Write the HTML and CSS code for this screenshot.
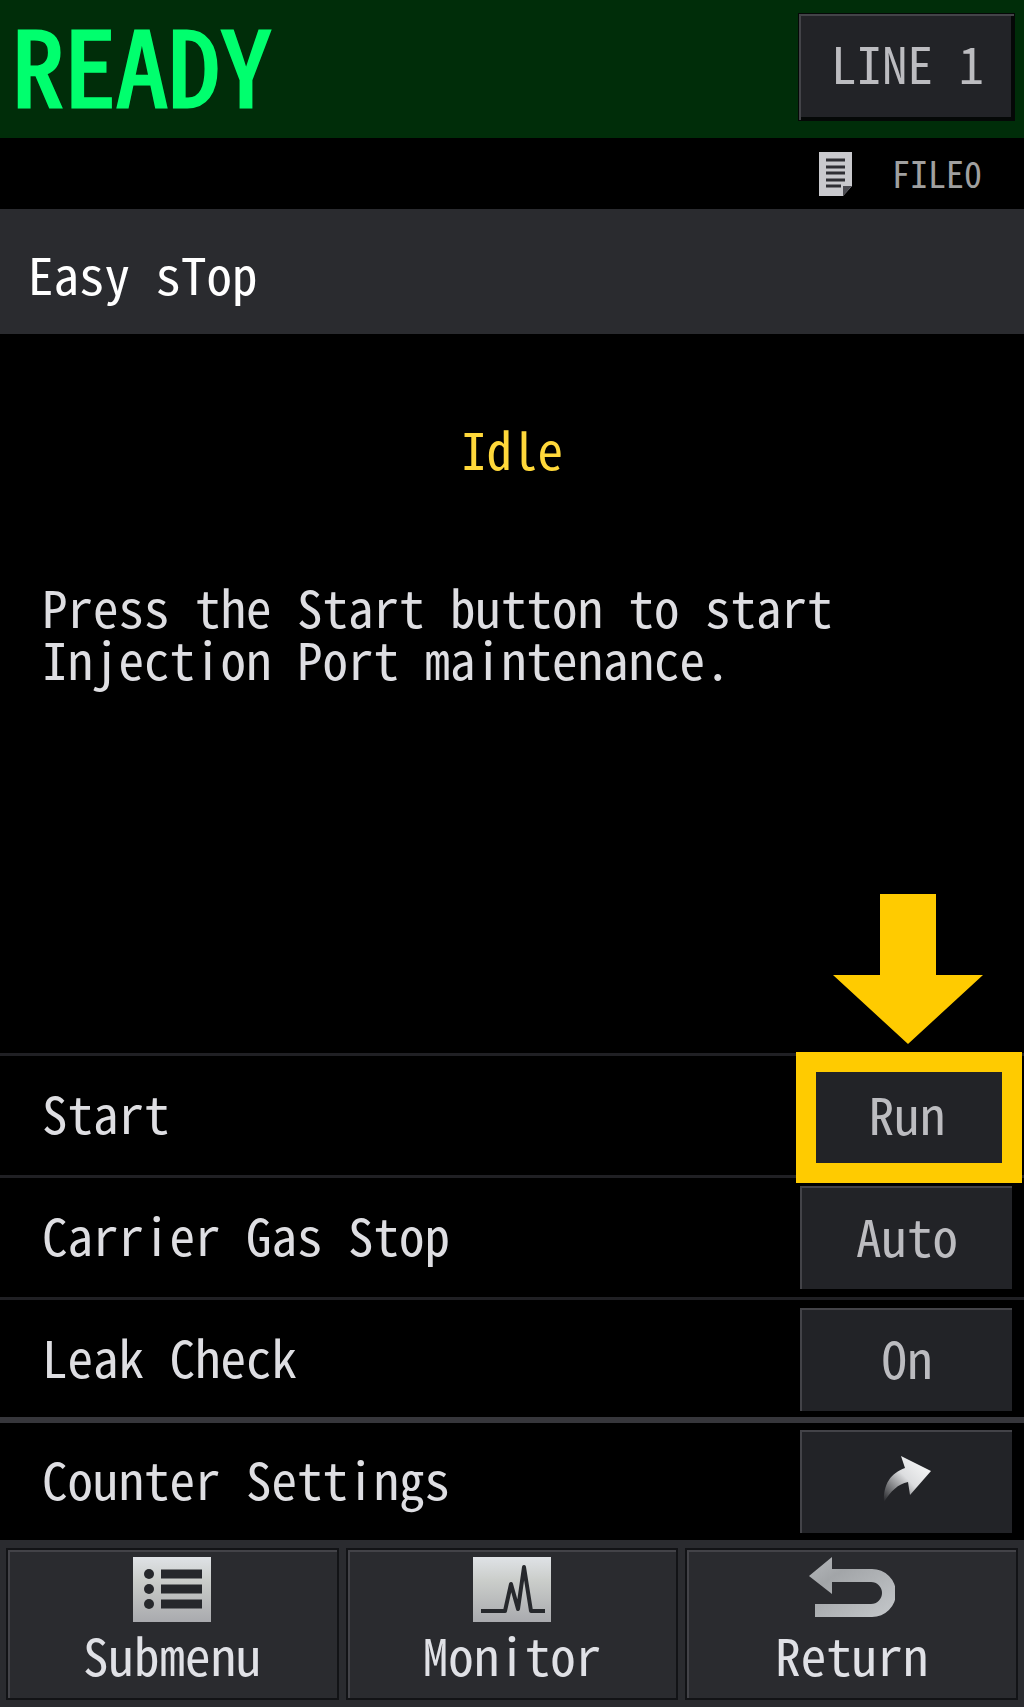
FILE: index.html
```html
<!DOCTYPE html>
<html lang="en">
<head>
<meta charset="utf-8">
<meta name="viewport" content="width=device-width, initial-scale=1">
<title>Easy sTop</title>
<link rel="stylesheet" href="styles.css">
</head>
<body>
<header class="status">
  <strong class="status-text">READY</strong>
  <button class="key key-line" type="button">LINE 1</button>
</header>
<div class="file-bar">
  <svg class="file-icon" viewBox="0 0 33 44" aria-hidden="true">
    <path d="M0 0H33V34L24 44H0Z" fill="#c9c9cd"/>
    <path d="M24 44V34H33Z" fill="#4a4a50"/>
    <path d="M7 8H26M7 15H26M7 21H26M7 28H26M7 34H22" stroke="#2e2e33" stroke-width="3"/>
  </svg>
  <span class="file-name">FILE0</span>
</div>
<h1 class="title">Easy sTop</h1>
<main class="content">
  <p class="state">Idle</p>
  <p class="message">Press the Start button to start<br>Injection Port maintenance.</p>
</main>
<section class="settings">
  <div class="row">
    <span id="start">Start</span>
    <div class="target">
      <button class="key" type="button" aria-describedby="start">Run</button>
      <span class="frame"></span>
      <svg class="pointer" viewBox="0 0 150 150" aria-hidden="true"><path d="M47 0H103V81H150L75 150L0 81H47Z" fill="#ffcb00"/></svg>
    </div>
  </div>
  <div class="row">
    <span id="gas">Carrier Gas Stop</span>
    <button class="key" type="button" aria-describedby="gas">Auto</button>
  </div>
  <div class="row">
    <span id="leak">Leak Check</span>
    <button class="key" type="button" aria-describedby="leak">On</button>
  </div>
  <div class="row row-link">
    <span id="counter">Counter Settings</span>
    <button class="key" type="button" aria-labelledby="counter">
      <svg class="go-icon" viewBox="0 0 48 46" aria-hidden="true">
        <defs><linearGradient id="go" x1="1" y1="0" x2="0" y2="1"><stop offset="0" stop-color="#fff"/><stop offset=".5" stop-color="#dcdddf"/><stop offset="1" stop-color="#222327"/></linearGradient></defs>
        <path d="M18 0L48 15L27 39L25 26C15 28 8 35 1 46C0 28 8 17 22 12Z" fill="url(#go)"/>
      </svg>
    </button>
  </div>
</section>
<nav class="footer">
  <button class="tab" type="button">
    <svg class="tab-icon" viewBox="0 0 78 65" aria-hidden="true">
      <defs><linearGradient id="plate" x1="0" y1="0" x2="0" y2="1"><stop offset="0" stop-color="#dfe2e6"/><stop offset=".35" stop-color="#cbcecb"/><stop offset="1" stop-color="#a9aaae"/></linearGradient></defs>
      <path d="M0 0H78V65H0Z" fill="url(#plate)"/>
      <path d="M28 17H69M28 32H69M28 47H69" stroke="#26282c" stroke-width="9"/>
      <circle cx="16" cy="17" r="5" fill="#26282c"/><circle cx="16" cy="32" r="5" fill="#26282c"/><circle cx="16" cy="47" r="5" fill="#26282c"/>
    </svg>
    Submenu
  </button>
  <button class="tab" type="button">
    <svg class="tab-icon" viewBox="0 0 78 65" aria-hidden="true">
      <path d="M0 0H78V65H0Z" fill="url(#plate)"/>
      <path d="M8 54H32L38 27L45 52L51 10L58 54H72" fill="none" stroke="#26282c" stroke-width="4" stroke-linejoin="round"/>
    </svg>
    Monitor
  </button>
  <button class="tab" type="button">
    <svg class="tab-icon tab-icon-wide" viewBox="0 0 86 65" aria-hidden="true">
      <defs><linearGradient id="back" x1="0" y1="0" x2="1" y2="1"><stop offset="0" stop-color="#b5b8bb"/><stop offset=".3" stop-color="#a2a5a8"/><stop offset="1" stop-color="#c5c8cb"/></linearGradient></defs>
      <path d="M0 19L23 0V12H63A23 23 0 0 1 63 60H6V47H62A11 11 0 0 0 62 25H23V37Z" fill="url(#back)"/>
    </svg>
    Return
  </button>
</nav>
</body>
</html>
```
FILE: styles.css
```css
* { box-sizing: border-box; }

body {
  display: flex;
  flex-direction: column;
  min-height: 100vh;
  margin: 0;
  background: #000;
  color: #dedee2;
  font-family: "Noto Sans Mono CJK JP", "Noto Sans CJK JP", monospace;
  font-feature-settings: "hwid";
  font-size: 51px;
  line-height: 52px;
}

button {
  font: inherit;
  font-feature-settings: inherit;
  cursor: pointer;
}

svg { display: block; }

.status {
  display: flex;
  align-items: flex-start;
  justify-content: space-between;
  padding: 14px 10px 18px 12px;
  background: #002d09;
}

.status-text {
  color: #00ff6e;
  font-size: 104px;
  font-weight: 400;
  line-height: 96px;
  -webkit-text-stroke: 3px #00ff6e;
}

.key {
  display: flex;
  align-items: center;
  justify-content: center;
  width: 212px;
  height: 103px;
  padding: 0 0 8px;
  border: 0 solid #434348;
  border-width: 2px 0 0 2px;
  background: #222327;
  color: #bcbcc0;
}

.key-line {
  width: 215px;
  height: 106px;
  padding-bottom: 12px;
  box-shadow: inset -3px -3px #050807;
  outline: 1px solid #050807;
}

.file-bar {
  display: flex;
  align-items: center;
  justify-content: flex-end;
  gap: 40px;
  padding: 10px 42px 9px;
  color: #a0a0a0;
  font-size: 36px;
  font-weight: 300;
}

.file-name { padding-bottom: 4px; }

.file-bar {
  min-height: 71px;
  line-height: 48px;
}

.file-icon {
  width: 33px;
  height: 44px;
}

.title {
  margin: 0;
  padding: 38px 28px 35px;
  background: #2a2b2f;
  color: #fff;
  font-size: inherit;
  font-weight: 400;
}

.content {
  flex: 1;
  padding: 88px 42px;
}

.state {
  margin: 0 0 106px;
  color: #ffd83a;
  text-align: center;
}

.message { margin: 0; }

.row {
  display: flex;
  align-items: center;
  justify-content: space-between;
  padding: 8px 12px 8px 42px;
  border-top: 3px solid #202024;
}

.row > span { padding-bottom: 8px; }

.row:nth-child(3) { padding-bottom: 6px; }

.row-link {
  padding-top: 7px;
  padding-bottom: 7px;
  border-top: 6px solid #36363b;
}

.target { position: relative; }

.frame {
  position: absolute;
  inset: -12px -10px -16px -4px;
  border: 20px solid #ffcb00;
  pointer-events: none;
}

.pointer {
  position: absolute;
  right: 29px;
  bottom: 123px;
  width: 150px;
}

.go-icon {
  width: 48px;
  height: 46px;
}

.footer {
  display: grid;
  grid-template-columns: repeat(3, 1fr);
  gap: 7px;
  padding: 8px 6px 7px;
  background: #2a2b2f;
}

.tab {
  display: flex;
  flex-direction: column;
  align-items: center;
  gap: 6px;
  padding: 7px 0 18px;
  border: 2px solid #121316;
  background: #2a2b2f;
  box-shadow: inset 2px 2px #434348;
  color: #e0e1e6;
}

.tab-icon {
  width: 78px;
  height: 65px;
}

.tab-icon-wide { width: 86px; }
```
